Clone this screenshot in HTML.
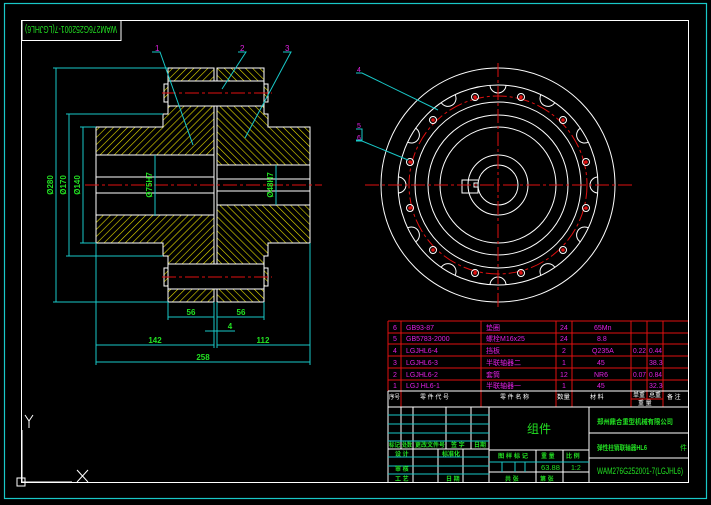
<!DOCTYPE html>
<html><head><meta charset="utf-8"><style>
html,body{margin:0;padding:0;background:#000;}
svg{display:block}
text{font-family:"Liberation Sans","Noto Sans CJK SC",sans-serif;}
</style></head><body>
<svg width="711" height="505" viewBox="0 0 711 505" xmlns="http://www.w3.org/2000/svg">
<defs>
<pattern id="hl" width="5" height="5" patternUnits="userSpaceOnUse" patternTransform="rotate(45)"><rect width="5" height="5" fill="#000"/><line x1="0" y1="0" x2="0" y2="5" stroke="#e8e000" stroke-width="1.2"/></pattern>
<pattern id="hr" width="5" height="5" patternUnits="userSpaceOnUse" patternTransform="rotate(-45)"><rect width="5" height="5" fill="#000"/><line x1="0" y1="0" x2="0" y2="5" stroke="#e8e000" stroke-width="1.2"/></pattern>
</defs>
<rect width="711" height="505" fill="#000"/>
<rect x="4.5" y="3.5" width="702" height="495" fill="none" stroke="#19c8c8" stroke-width="1.2"/>
<rect x="21.5" y="20.5" width="667" height="462" fill="none" stroke="#fff" stroke-width="1"/>
<rect x="22" y="20.5" width="99" height="20" fill="none" stroke="#fff"/>
<text transform="translate(71 30) rotate(180)" x="0" y="4" fill="#22e022" font-size="10" text-anchor="middle" textLength="92" lengthAdjust="spacingAndGlyphs">WAM276G252001-7(LGJHL6)</text>

<g stroke="#fff" stroke-width="1">
<rect x="168" y="68" width="46" height="13" fill="url(#hl)"/>
<path d="M168 106H214V155H96V127H163V114H168Z" fill="url(#hl)"/>
<rect x="168" y="289" width="46" height="13" fill="url(#hl)"/>
<path d="M168 264H214V215H96V243H163V256H168Z" fill="url(#hl)"/>
<rect x="164" y="84" width="4" height="18" fill="url(#hl)"/>
<rect x="164" y="268" width="4" height="18" fill="url(#hl)"/>
<rect x="217" y="68" width="47" height="13" fill="url(#hr)"/>
<path d="M217 106H264V114H268V127H310V165H217Z" fill="url(#hr)"/>
<rect x="217" y="289" width="47" height="13" fill="url(#hr)"/>
<path d="M217 264H264V256H268V243H310V205H217Z" fill="url(#hr)"/>
<rect x="264" y="84" width="4" height="18" fill="url(#hr)"/>
<rect x="264" y="268" width="4" height="18" fill="url(#hr)"/>
<rect x="168" y="81" width="96" height="25" fill="none"/>
<rect x="168" y="264" width="96" height="25" fill="none"/>
<rect x="96" y="155" width="118" height="60" fill="none"/>
<line x1="96" y1="177" x2="214" y2="177"/><line x1="96" y1="193" x2="214" y2="193"/>
<rect x="217" y="165" width="93" height="40" fill="none"/>
<line x1="217" y1="179" x2="310" y2="179"/><line x1="217" y1="191" x2="310" y2="191"/>
</g>
<g stroke="#e01010" stroke-width="1" stroke-dasharray="14 3 3 3">
<line x1="85" y1="185" x2="322" y2="185"/>
<line x1="162" y1="93" x2="272" y2="93"/>
<line x1="162" y1="277" x2="272" y2="277"/>
</g>
<g stroke="#19c8c8" stroke-width="1" fill="none">
<polyline points="152,52 160,52 193,145"/>
<polyline points="238,52 246,52 222,89"/>
<polyline points="283,52 291,52 245,138"/>
</g>
<g fill="#e020e0" font-size="8"><text x="155" y="51">1</text><text x="240" y="51">2</text><text x="285" y="51">3</text></g>
<g stroke="#19c8c8" stroke-width="1" fill="none">
<line x1="53" y1="68" x2="168" y2="68"/><line x1="53" y1="302" x2="168" y2="302"/><line x1="56" y1="68" x2="56" y2="302"/>
<line x1="66" y1="114" x2="163" y2="114"/><line x1="66" y1="256" x2="163" y2="256"/><line x1="69" y1="114" x2="69" y2="256"/>
<line x1="80" y1="127" x2="96" y2="127"/><line x1="80" y1="243" x2="96" y2="243"/><line x1="83" y1="127" x2="83" y2="243"/>
<line x1="155" y1="155" x2="155" y2="216"/>
<line x1="276" y1="165" x2="276" y2="205"/>
<line x1="168" y1="302" x2="168" y2="320"/><line x1="264" y1="302" x2="264" y2="320"/>
<line x1="214" y1="302" x2="214" y2="348"/><line x1="217" y1="302" x2="217" y2="348"/>
<line x1="168" y1="317" x2="214" y2="317"/><line x1="217" y1="317" x2="264" y2="317"/>
<line x1="205" y1="331" x2="235" y2="331"/>
<line x1="96" y1="243" x2="96" y2="365"/><line x1="310" y1="243" x2="310" y2="365"/>
<line x1="96" y1="345" x2="214" y2="345"/><line x1="217" y1="345" x2="310" y2="345"/>
<line x1="96" y1="362" x2="310" y2="362"/>
</g>
<g fill="#22e022" font-size="8" font-weight="bold">
<text transform="translate(53 185) rotate(-90)" text-anchor="middle">Ø280</text>
<text transform="translate(66 185) rotate(-90)" text-anchor="middle">Ø170</text>
<text transform="translate(80 185) rotate(-90)" text-anchor="middle">Ø140</text>
<text transform="translate(152 185) rotate(-90)" text-anchor="middle">Ø75H7</text>
<text transform="translate(273 185) rotate(-90)" text-anchor="middle">Ø48H7</text>
<text x="191" y="315" text-anchor="middle">56</text><text x="241" y="315" text-anchor="middle">56</text>
<text x="230" y="329" text-anchor="middle">4</text>
<text x="155" y="343" text-anchor="middle">142</text><text x="263" y="343" text-anchor="middle">112</text>
<text x="203" y="360" text-anchor="middle">258</text>
</g>

<g stroke="#fff" stroke-width="1" fill="none">
<circle cx="498" cy="185" r="117"/>
<circle cx="498" cy="185" r="100"/>
<circle cx="498" cy="185" r="83"/>
<circle cx="498" cy="185" r="70"/>
<circle cx="498" cy="185" r="58"/>
<circle cx="498" cy="185" r="30"/>
<circle cx="498" cy="185" r="20"/>
<path d="M478 180H462V193H478V187H474V183H478"/>
<g id="sc"><path d="M490 85a8 8 0 0 0 16 0M490 285a8 8 0 0 1 16 0"/></g>
<use href="#sc" transform="rotate(30 498 185)"/><use href="#sc" transform="rotate(60 498 185)"/><use href="#sc" transform="rotate(90 498 185)"/><use href="#sc" transform="rotate(120 498 185)"/><use href="#sc" transform="rotate(150 498 185)"/>
</g>
<circle cx="498" cy="185" r="89" fill="none" stroke="#e01010" stroke-dasharray="14 3 3 3"/>
<g stroke="#e01010"><line x1="365" y1="185" x2="632" y2="185" stroke-dasharray="14 3 3 3"/><line x1="498" y1="63" x2="498" y2="310" stroke-dasharray="14 3 3 3"/></g>
<g fill="none" stroke="#fff" stroke-width="1">
<circle cx="475" cy="97" r="3.5"/><circle cx="521" cy="97" r="3.5"/>
<circle cx="433" cy="120" r="3.5"/><circle cx="563" cy="120" r="3.5"/>
<circle cx="410" cy="162" r="3.5"/><circle cx="586" cy="162" r="3.5"/>
<circle cx="410" cy="208" r="3.5"/><circle cx="586" cy="208" r="3.5"/>
<circle cx="433" cy="250" r="3.5"/><circle cx="563" cy="250" r="3.5"/>
<circle cx="475" cy="273" r="3.5"/><circle cx="521" cy="273" r="3.5"/>
</g>
<g fill="#e01010"><circle cx="475" cy="97" r="1.8"/><circle cx="521" cy="97" r="1.8"/><circle cx="433" cy="120" r="1.8"/><circle cx="563" cy="120" r="1.8"/><circle cx="410" cy="162" r="1.8"/><circle cx="586" cy="162" r="1.8"/><circle cx="410" cy="208" r="1.8"/><circle cx="586" cy="208" r="1.8"/><circle cx="433" cy="250" r="1.8"/><circle cx="563" cy="250" r="1.8"/><circle cx="475" cy="273" r="1.8"/><circle cx="521" cy="273" r="1.8"/></g>
<g stroke="#19c8c8" fill="none">
<polyline points="356,73 362,73 438,110"/>
<polyline points="356,129 362,129 362,140 356,140"/>
<polyline points="356,141 362,141 408,160"/>
</g>
<g fill="#e020e0" font-size="7"><text x="357" y="72">4</text><text x="357" y="128">5</text><text x="357" y="140">6</text></g>

<g stroke="#e01010" stroke-width="1" fill="none">
<line x1="388" y1="321" x2="688" y2="321"/><line x1="388" y1="333" x2="688" y2="333"/><line x1="388" y1="344" x2="688" y2="344"/><line x1="388" y1="356" x2="688" y2="356"/><line x1="388" y1="368" x2="688" y2="368"/><line x1="388" y1="380" x2="688" y2="380"/>
<line x1="401" y1="321" x2="401" y2="407"/><line x1="481" y1="321" x2="481" y2="407"/><line x1="556" y1="321" x2="556" y2="407"/><line x1="572" y1="321" x2="572" y2="407"/><line x1="631" y1="321" x2="631" y2="407"/><line x1="647" y1="321" x2="647" y2="399"/><line x1="663" y1="321" x2="663" y2="407"/><line x1="631" y1="399" x2="663" y2="399"/>
<line x1="388" y1="321" x2="388" y2="391"/>
</g>
<g fill="#e020e0" font-size="7">
<text x="393" y="330">6</text><text x="406" y="330">GB93-87</text><text x="486" y="330">垫圈</text><text x="560" y="330">24</text><text x="594" y="330">65Mn</text>
<text x="393" y="341">5</text><text x="406" y="341">GB5783-2000</text><text x="486" y="341">螺栓M16x25</text><text x="560" y="341">24</text><text x="597" y="341">8.8</text>
<text x="393" y="353">4</text><text x="406" y="353">LGJHL6-4</text><text x="486" y="353">挡板</text><text x="562" y="353">2</text><text x="592" y="353">Q235A</text><text x="633" y="353" textLength="13" lengthAdjust="spacingAndGlyphs">0.22</text><text x="649" y="353" textLength="13" lengthAdjust="spacingAndGlyphs">0.44</text>
<text x="393" y="365">3</text><text x="406" y="365">LGJHL6-3</text><text x="486" y="365">半联轴器二</text><text x="562" y="365">1</text><text x="597" y="365">45</text><text x="649" y="365">38.3</text>
<text x="393" y="377">2</text><text x="406" y="377">LGJHL6-2</text><text x="486" y="377">套筒</text><text x="560" y="377">12</text><text x="594" y="377">NR6</text><text x="633" y="377" textLength="13" lengthAdjust="spacingAndGlyphs">0.07</text><text x="649" y="377" textLength="13" lengthAdjust="spacingAndGlyphs">0.84</text>
<text x="393" y="388">1</text><text x="406" y="388">LGJ HL6-1</text><text x="486" y="388">半联轴器一</text><text x="562" y="388">1</text><text x="597" y="388">45</text><text x="649" y="388">32.3</text>
</g>
<g fill="#fff" font-size="6">
<text x="389" y="399" textLength="11" lengthAdjust="spacingAndGlyphs">序号</text><text x="420" y="399">零 件 代 号</text><text x="500" y="399">零 件 名 称</text><text x="557" y="399" textLength="13" lengthAdjust="spacingAndGlyphs">数量</text><text x="590" y="399">材  料</text><text x="633" y="397" textLength="12" lengthAdjust="spacingAndGlyphs">单重</text><text x="649" y="397" textLength="12" lengthAdjust="spacingAndGlyphs">总重</text><text x="638" y="405">重 量</text><text x="667" y="399">备 注</text>
</g>
<g stroke="#fff" fill="none" stroke-width="1">
<line x1="388" y1="391" x2="688" y2="391"/><line x1="388" y1="407" x2="688" y2="407"/>
<line x1="388" y1="391" x2="388" y2="483"/><line x1="489" y1="407" x2="489" y2="483"/><line x1="589" y1="407" x2="589" y2="483"/>
<line x1="589" y1="433" x2="688" y2="433"/><line x1="589" y1="458" x2="688" y2="458"/>
<line x1="489" y1="450" x2="589" y2="450"/><line x1="388" y1="449" x2="489" y2="449"/><line x1="489" y1="472" x2="589" y2="472"/>
<line x1="401" y1="407" x2="401" y2="449"/><line x1="413" y1="407" x2="413" y2="483"/><line x1="446" y1="407" x2="446" y2="449"/><line x1="471" y1="407" x2="471" y2="449"/>
<line x1="438" y1="449" x2="438" y2="483"/><line x1="463" y1="449" x2="463" y2="483"/>
<line x1="536" y1="450" x2="536" y2="483"/><line x1="563" y1="450" x2="563" y2="483"/>
</g>
<g stroke="#19c8c8" fill="none" stroke-width="1">
<line x1="388" y1="415" x2="489" y2="415"/><line x1="388" y1="424" x2="489" y2="424"/><line x1="388" y1="433" x2="489" y2="433"/><line x1="388" y1="441" x2="489" y2="441"/>
<line x1="388" y1="457" x2="489" y2="457"/><line x1="388" y1="466" x2="489" y2="466"/><line x1="388" y1="474" x2="489" y2="474"/>
<line x1="489" y1="462" x2="589" y2="462"/><line x1="502" y1="462" x2="502" y2="472"/><line x1="515" y1="462" x2="515" y2="472"/><line x1="525" y1="462" x2="525" y2="472"/>
</g>
<g fill="#22e022" font-size="6" font-weight="bold">
<text x="389" y="447" textLength="11" lengthAdjust="spacingAndGlyphs">标记</text><text x="402" y="447" textLength="10" lengthAdjust="spacingAndGlyphs">处数</text><text x="415" y="447" textLength="30" lengthAdjust="spacingAndGlyphs">更改文件号</text><text x="451" y="447">签 字</text><text x="474" y="447" textLength="12" lengthAdjust="spacingAndGlyphs">日期</text>
<text x="395" y="456">设 计</text><text x="442" y="456" textLength="18" lengthAdjust="spacingAndGlyphs">标准化</text><text x="395" y="471">审 核</text><text x="395" y="481">工 艺</text><text x="446" y="481">日 期</text>
<text x="498" y="458" textLength="30" lengthAdjust="spacingAndGlyphs">图 样 标 记</text><text x="541" y="458">重 量</text><text x="566" y="458">比 例</text>
<text x="505" y="481">共   张</text><text x="540" y="481">第   张</text>
</g>
<text x="539" y="433" fill="#22e022" font-size="12" text-anchor="middle">组件</text>
<text x="541" y="470" fill="#22e022" font-size="7" textLength="19" lengthAdjust="spacingAndGlyphs">63.88</text><text x="571" y="470" fill="#22e022" font-size="7">1:2</text>
<text x="597" y="424" fill="#22e022" font-size="7" font-weight="bold" textLength="76" lengthAdjust="spacingAndGlyphs">郑州鼎合重型机械有限公司</text>
<text x="597" y="450" fill="#22e022" font-size="7" font-weight="bold" textLength="50" lengthAdjust="spacingAndGlyphs">弹性柱销联轴器HL6</text><text x="680" y="450" fill="#22e022" font-size="7">件</text>
<text x="597" y="474" fill="#22e022" font-size="9" textLength="86" lengthAdjust="spacingAndGlyphs">WAM276G252001-7(LGJHL6)</text>
<g stroke="#fff" fill="none" stroke-width="1">
<line x1="22" y1="430" x2="22" y2="482"/><line x1="22" y1="482" x2="72" y2="482"/>
<rect x="17" y="478" width="8" height="8"/>
<path d="M25 415L29 421L33 415M29 421V428"/>
<path d="M77 470L88 482M88 470L77 482"/>
</g>
</svg>
</body></html>
